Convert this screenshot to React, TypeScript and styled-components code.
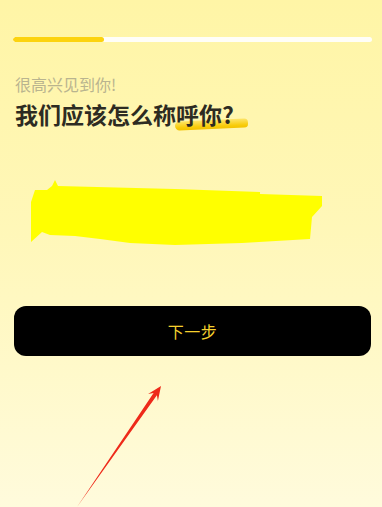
import React from "react";
import styled, { createGlobalStyle } from "styled-components";

const Global = createGlobalStyle`
  html, body { margin: 0; padding: 0; }
  body { font-family: "Noto Sans CJK SC", "Noto Sans", sans-serif; }
  * { box-sizing: border-box; }
`;

const Page = styled.div`
  position: relative;
  min-height: 507px;
  padding: 37px 10px 0 13px;
  background: linear-gradient(180deg, #fff5a6 0%, #fff7b8 45%, #fffbdc 100%);
  overflow: hidden;
`;

const Track = styled.div`
  height: 5px;
  border-radius: 3px;
  background: #fffef8;
  overflow: hidden;
`;

const Fill = styled.div`
  height: 100%;
  border-radius: 3px;
  background: #fcd30f;
`;

const Subtitle = styled.div`
  margin: 31px 0 0 2px;
  font-size: 16px;
  line-height: 22px;
  color: #b9b48f;
`;

const Title = styled.h1`
  margin: 3px 0 0 2px;
  font-size: 23px;
  line-height: 32px;
  font-weight: 700;
  color: #2d2b22;
`;

const Marked = styled.span`
  position: relative;
  z-index: 0;
  &::after {
    content: "";
    position: absolute;
    z-index: -1;
    left: -1px;
    right: -14px;
    bottom: 2px;
    height: 9px;
    border-radius: 6px 5px 5px 6px;
    transform: rotate(-2.5deg);
    background: linear-gradient(180deg, #fde56a 0%, #f8cc0a 70%, #f3c300 100%);
  }
`;

const NameArea = styled.div`
  margin: 47px 0 0 15px;
  height: 70px;
`;

const NextButton = styled.button`
  display: flex;
  align-items: center;
  justify-content: center;
  width: calc(100% - 2px);
  margin: 59px 1px 0 1px;
  height: 50px;
  border: none;
  border-radius: 12px;
  background: #000;
  color: #f6d12e;
  font-family: "Noto Sans CJK SC", "Noto Sans", sans-serif;
  font-size: 16px;
  font-weight: 400;
  letter-spacing: 0.5px;
`;

const Overlay = styled.svg`
  position: absolute;
  left: 0;
  top: 0;
  pointer-events: none;
`;

export default function App() {
  const progress = 91 / 359;
  return (
    <>
      <Global />
      <Page>
        <Track>
          <Fill style={{ width: `${progress * 100}%` }} />
        </Track>
        <Subtitle>很高兴见到你!</Subtitle>
        <Title>
          我们应该怎么称<Marked>呼你?</Marked>
        </Title>
        <NameArea>
          <svg width="300" height="70" viewBox="28 178 300 70">
            <path
              d="M55 181 L58 187 L175 190 L260 193 L260 195 L322 197 L322 207 L312 218 L310 240 L242 244 L175 246 L130 244 L100 240 L75 237 L50 236 L42 233 L31 243 L31 203 L35 191 L47 191 L52 187 Z"
              fill="#ffff00"
            />
          </svg>
        </NameArea>
        <NextButton>下一步</NextButton>
        <Overlay width="382" height="507" viewBox="0 0 382 507">
          <polygon
            points="77,507 156.9,395.3 157.9,400.9 161,386 148.1,394.1 153.6,393.1"
            fill="#ee2a1a"
          />
        </Overlay>
      </Page>
    </>
  );
}
